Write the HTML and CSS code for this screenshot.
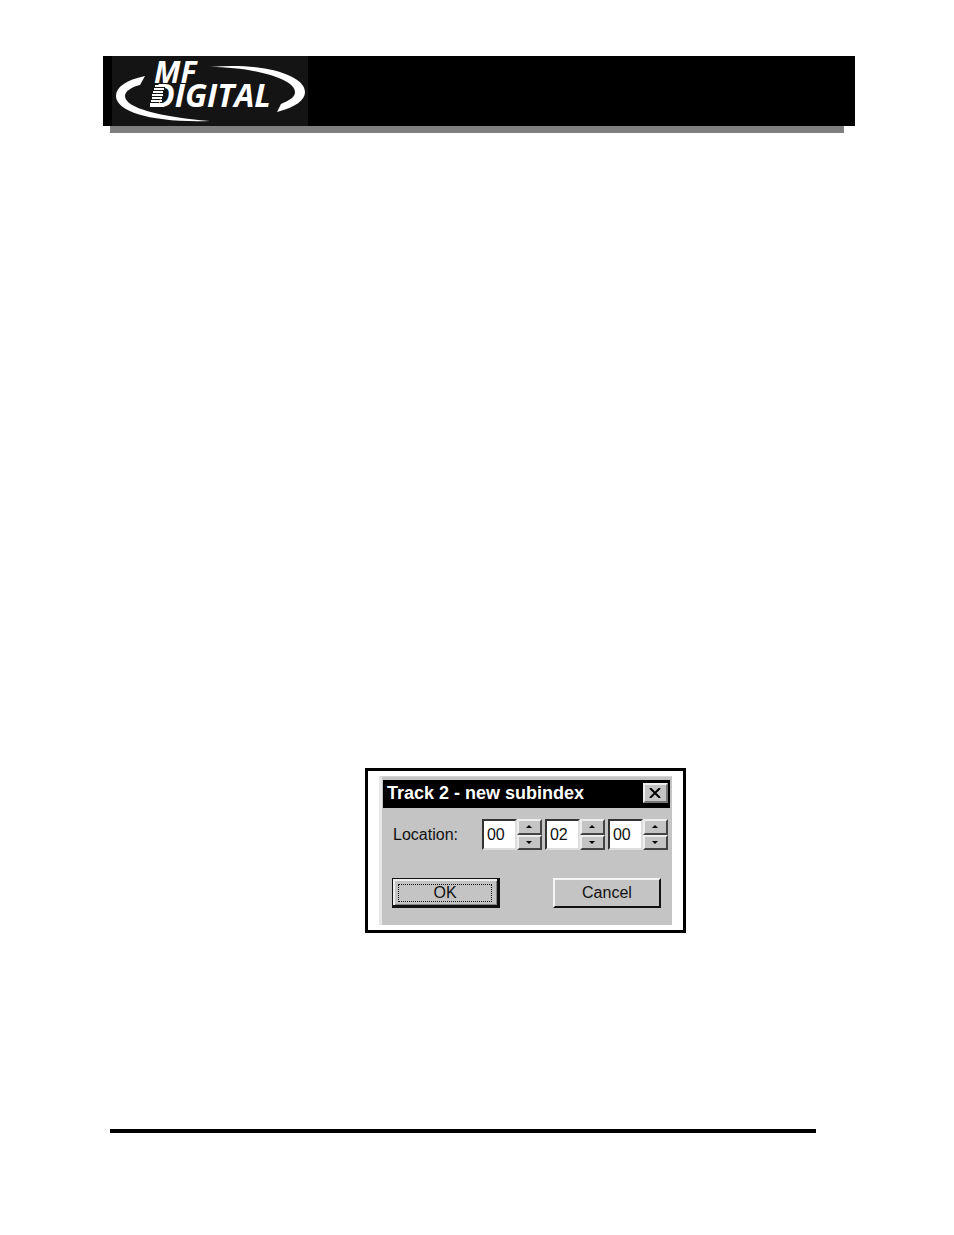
FILE: index.html
```html
<!DOCTYPE html>
<html lang="en">
<head>
    <meta charset="UTF-8">
    <meta name="viewport" content="width=device-width, initial-scale=1.0">
    <title>MF Digital</title>
    <link rel="stylesheet" href="styles.css">
</head>
<body>

    <header class="banner">
        <svg class="logo" viewBox="0 0 196 70" role="img" aria-label="MF Digital">
            <path d="M33 20 C14 24 4 31 4 40 C4 56 42 67 98 65 C48 61 13 52 13 40 C13 35 20 31 28 29 Z" />
            <path d="M98 11 C150 6 193 19 193 36 C193 44 184 51 165 56 L169 48 C178 44 183 41 183 36 C183 23 142 11 98 11 Z" />
            <text>
                <tspan x="42" y="27">MF</tspan>
                <tspan class="wide" x="41" y="51">DIGITAL</tspan>
            </text>
            <!-- speed lines across the D -->
            <path class="stripe-light" d="M43 30 H54 M42 33 H52 M41 36 H51 M40 39 H51 M40 42 H50 M39 45 H50 M38 48 H52 M38 50 H52" />
            <path class="stripe-dark" d="M42 31.5 H53 M42 34.5 H52 M41 37.5 H50 M40 40.5 H49 M40 43.5 H48 M39 46.5 H47" />
        </svg>
    </header>

    <main class="content">
        <div class="figure">
            <form class="dialog">
                <div class="title-bar">
                    <h1>Track 2 - new subindex</h1>
                    <button type="button" class="close" aria-label="Close">
                        <svg viewBox="0 0 12 10"><path d="M1 0 L11 10 M11 0 L1 10" /></svg>
                    </button>
                </div>

                <div class="location">
                    <label for="minutes">Location:</label>
                    <div class="fields">
                        <div class="spinner">
                            <input type="text" id="minutes" value="00">
                            <div class="arrows">
                                <button type="button" aria-label="Minutes up"><svg viewBox="0 0 6 3"><path d="M3 0 L6 3 H0 Z" /></svg></button>
                                <button type="button" aria-label="Minutes down"><svg viewBox="0 0 6 3"><path d="M0 0 H6 L3 3 Z" /></svg></button>
                            </div>
                        </div>
                        <div class="spinner">
                            <input type="text" id="seconds" value="02" aria-label="Seconds">
                            <div class="arrows">
                                <button type="button" aria-label="Seconds up"><svg viewBox="0 0 6 3"><path d="M3 0 L6 3 H0 Z" /></svg></button>
                                <button type="button" aria-label="Seconds down"><svg viewBox="0 0 6 3"><path d="M0 0 H6 L3 3 Z" /></svg></button>
                            </div>
                        </div>
                        <div class="spinner">
                            <input type="text" id="frames" value="00" aria-label="Frames">
                            <div class="arrows">
                                <button type="button" aria-label="Frames up"><svg viewBox="0 0 6 3"><path d="M3 0 L6 3 H0 Z" /></svg></button>
                                <button type="button" aria-label="Frames down"><svg viewBox="0 0 6 3"><path d="M0 0 H6 L3 3 Z" /></svg></button>
                            </div>
                        </div>
                    </div>
                </div>

                <div class="actions">
                    <button type="button" class="btn btn-default"><span>OK</span></button>
                    <button type="button" class="btn">Cancel</button>
                </div>
            </form>
        </div>
    </main>

    <footer class="rule"></footer>

</body>
</html>
```
FILE: styles.css
```css
* {
    box-sizing: border-box;
}
body {
    font-family: "Liberation Sans", Arial, sans-serif;
    font-size: 16px;
    margin: 0;
    padding: 56px 99px 102px 103px;
    min-height: 100vh;
    display: flex;
    flex-direction: column;
    background-color: #ffffff;
    color: #111111;
}
button, input {
    font: inherit;
    color: inherit;
    margin: 0;
    padding: 0;
    border-radius: 0;
}
/* Header banner */
.banner {
    position: relative;
    background-color: #000000;
    padding-left: 9px;
}
.banner::after {
    content: "";
    position: absolute;
    top: 100%;
    left: 7px;
    right: 11px;
    height: 7px;
    background-color: #808080;
}
.logo {
    display: block;
    width: 196px;
    height: 70px;
    overflow: visible;
    background-color: #141414;
    fill: #ffffff;
}
.logo text {
    font-family: "Open Sans", sans-serif;
    font-size: 30px;
    font-weight: bold;
    font-style: italic;
}
.logo .wide {
    font-size: 32px;
}
.stripe-light {
    stroke: #ffffff;
    stroke-width: 2;
}
.stripe-dark {
    stroke: #141414;
    stroke-width: 1;
}
.content {
    flex: 1;
    display: flex;
    justify-content: center;
    align-items: flex-end;
    padding: 40px 0 196px 93px;
}
.figure {
    border: 3px solid #000000;
    padding: 5px 11px;
}
/* Dialog window */
.dialog {
    background-color: #c4c4c4;
    border-left: 3px solid #e6e6e6;
    border-top: 1px solid #d6d6d6;
    padding: 3px 2px 17px 1px;
}
.title-bar {
    display: flex;
    justify-content: space-between;
    align-items: center;
    height: 28px;
    padding: 0 2px 2px 4px;
    background-color: #000000;
    color: #ffffff;
}
.title-bar h1 {
    font-size: 18px;
    margin: 0;
}
.close {
    display: flex;
    justify-content: center;
    align-items: center;
    width: 25px;
    height: 20px;
    background-color: #c4c4c4;
    border: 2px solid;
    border-color: #eeeeee #777777 #777777 #eeeeee;
}
.close svg {
    width: 12px;
    height: 10px;
    stroke: #000000;
    stroke-width: 2;
}
.location {
    display: flex;
    justify-content: space-between;
    align-items: center;
    gap: 24px;
    padding: 11px 2px 0 10px;
}
.fields {
    display: flex;
    gap: 3px;
}
.spinner {
    display: flex;
}
.spinner input {
    width: 35px;
    height: 31px;
    padding-left: 3px;
    background-color: #ffffff;
    border: 2px solid;
    border-color: #333333 #dddddd #dddddd #333333;
}
.arrows {
    display: flex;
    flex-direction: column;
    width: 25px;
}
.arrows button {
    flex: 1;
    display: flex;
    justify-content: center;
    align-items: center;
    background-color: #c4c4c4;
    border: 2px solid;
    border-color: #eeeeee #444444 #444444 #eeeeee;
}
.arrows svg {
    width: 6px;
    height: 3px;
}
.actions {
    display: flex;
    justify-content: space-between;
    padding: 28px 9px 0 9px;
}
.btn {
    width: 108px;
    height: 30px;
    background-color: #c4c4c4;
    border: 2px solid;
    border-color: #f4f4f4 #111111 #111111 #f4f4f4;
}
.btn-default {
    padding: 5px;
    border-width: 1px 3px 3px 1px;
    border-color: #111111;
    box-shadow: inset 2px 2px #eeeeee, inset -1px -1px #888888;
}
.btn-default span {
    display: block;
    height: 18px;
    line-height: 16px;
    border: 1px dotted #111111;
}
/* Footer line */
.rule {
    height: 4px;
    margin: 0 39px 0 7px;
    background-color: #000000;
}
```
